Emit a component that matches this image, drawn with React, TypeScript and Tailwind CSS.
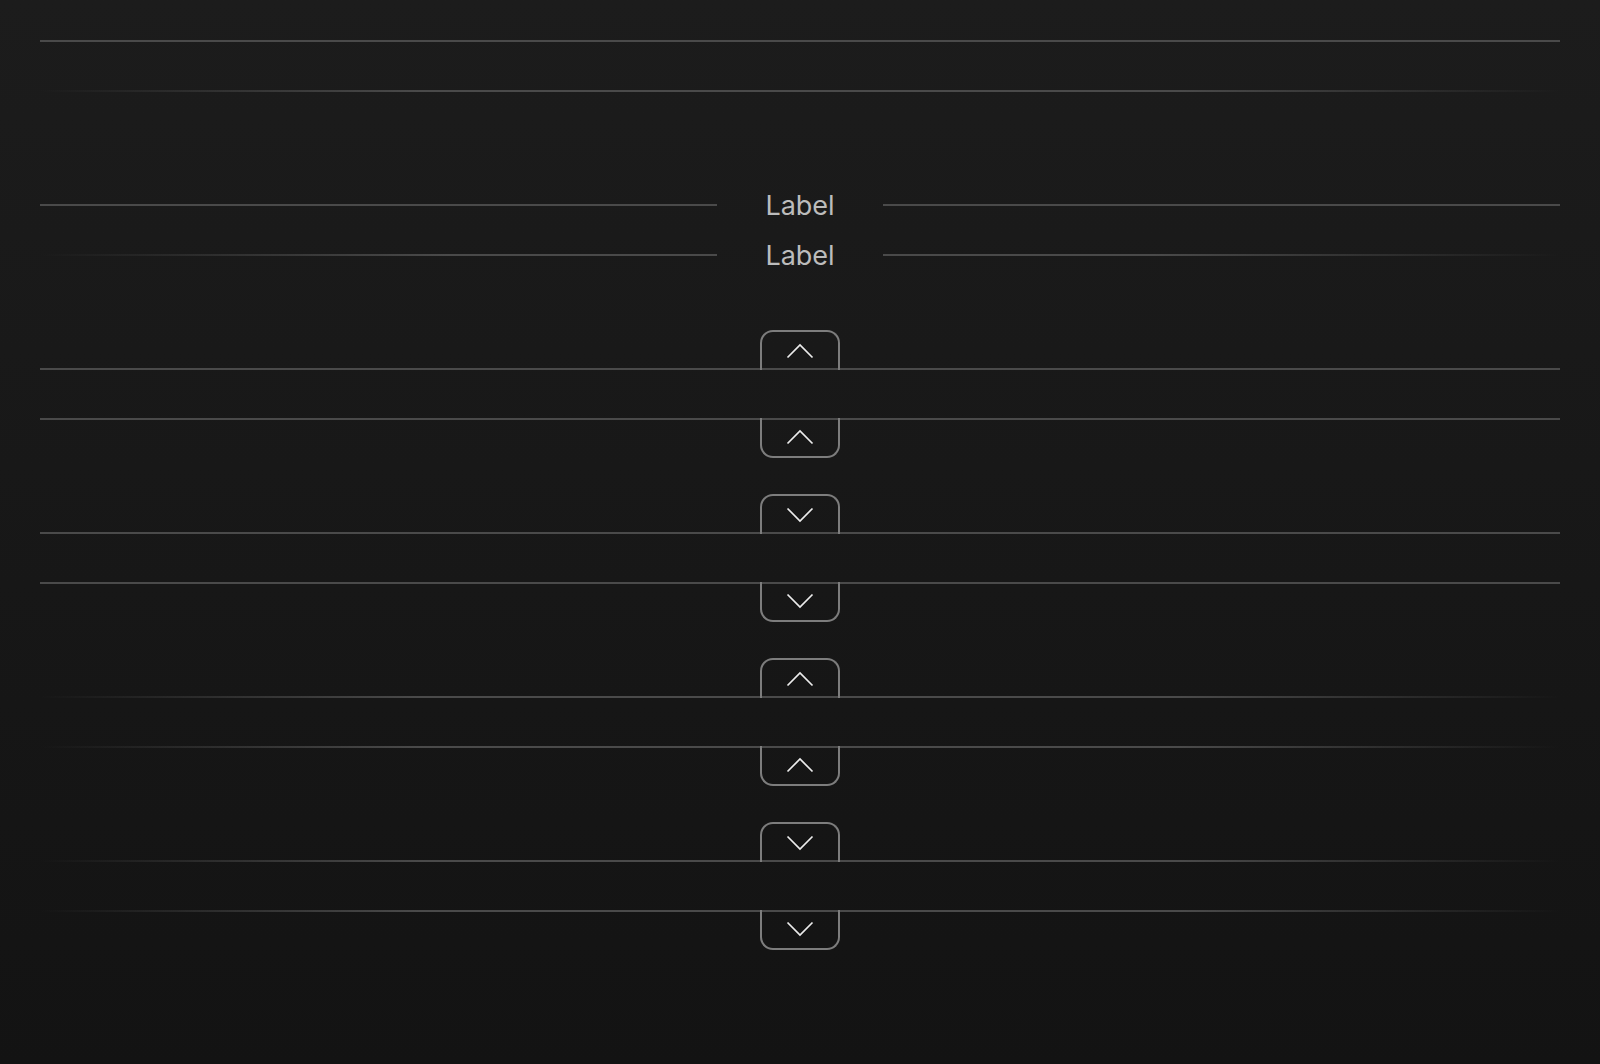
const LINE = 'bg-[#4a4a4a]'
const FADE = 'bg-[linear-gradient(90deg,transparent_0%,#4a4a4a_25%,#4a4a4a_75%,transparent_100%)]'

function Chevron({ dir }: { dir: 'up' | 'down' }) {
  return (
    <svg width="28" height="16" viewBox="0 0 28 16" fill="none" aria-hidden>
      <polyline
        points={dir === 'up' ? '1.5,14.5 14,2 26.5,14.5' : '1.5,1.5 14,14 26.5,1.5'}
        stroke="#ececec"
        strokeWidth="1.7"
      />
    </svg>
  )
}

function Divider({ fade }: { fade?: boolean }) {
  return <div className={`h-[2px] w-full ${fade ? FADE : LINE}`} />
}

function LabelDivider({ fade }: { fade?: boolean }) {
  return (
    <div className="flex h-[2px] w-full items-center gap-12">
      <div
        className={`h-[2px] flex-1 ${
          fade ? 'bg-gradient-to-r from-transparent to-[#4a4a4a] to-60%' : LINE
        }`}
      />
      <span className="font-['Inter',sans-serif] text-[27px] leading-none text-[#bcbcbc]">Label</span>
      <div
        className={`h-[2px] flex-1 ${
          fade ? 'bg-gradient-to-l from-transparent to-[#4a4a4a] to-60%' : LINE
        }`}
      />
    </div>
  )
}

function TabDivider({
  fade,
  dir,
  side,
}: {
  fade?: boolean
  dir: 'up' | 'down'
  side: 'top' | 'bottom'
}) {
  return (
    <div className={`relative h-[2px] w-full ${fade ? FADE : LINE}`}>
      <button
        aria-label={dir === 'up' ? 'Expandir' : 'Recolher'}
        className={
          side === 'top'
            ? 'absolute bottom-0 left-1/2 flex h-10 w-20 -translate-x-1/2 items-center justify-center rounded-t-[13px] border-2 border-b-0 border-[#7d7d7d]'
            : 'absolute top-0 left-1/2 flex h-10 w-20 -translate-x-1/2 items-center justify-center rounded-b-[13px] border-2 border-t-0 border-[#7d7d7d]'
        }
      >
        <Chevron dir={dir} />
      </button>
    </div>
  )
}

export default function App() {
  return (
    <div className="flex min-h-screen flex-col gap-[112px] bg-gradient-to-b from-[#1c1c1c] to-[#131313] px-10 pt-10">
      <section className="flex flex-col gap-12">
        <Divider />
        <Divider fade />
      </section>
      <section className="flex flex-col gap-12">
        <LabelDivider />
        <LabelDivider fade />
      </section>
      <section className="flex flex-col gap-12">
        <TabDivider dir="up" side="top" />
        <TabDivider dir="up" side="bottom" />
      </section>
      <section className="flex flex-col gap-12">
        <TabDivider dir="down" side="top" />
        <TabDivider dir="down" side="bottom" />
      </section>
      <section className="flex flex-col gap-12">
        <TabDivider fade dir="up" side="top" />
        <TabDivider fade dir="up" side="bottom" />
      </section>
      <section className="flex flex-col gap-12">
        <TabDivider fade dir="down" side="top" />
        <TabDivider fade dir="down" side="bottom" />
      </section>
    </div>
  )
}
